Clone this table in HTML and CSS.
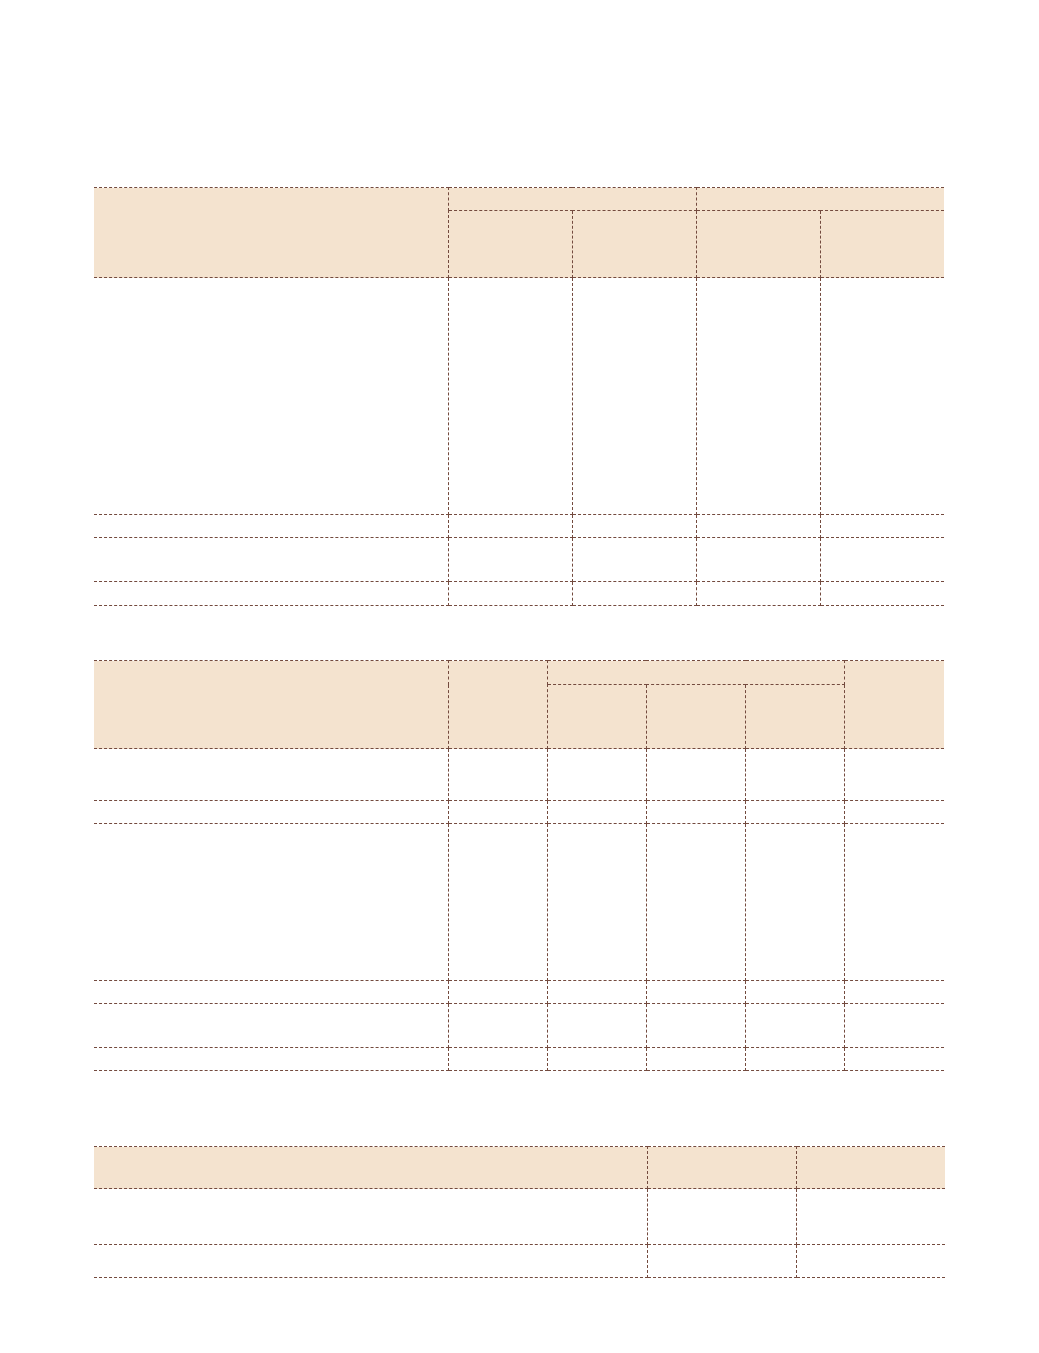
FILE: index.html
```html
<!DOCTYPE html>
<html>
<head>
<meta charset="utf-8">
<link rel="stylesheet" href="styles.css">
</head>
<body>
<div class="page">
  <table class="grid t1">
    <colgroup><col class="c-wide"><col class="c-124"><col class="c-124"><col class="c-124"><col class="c-124"></colgroup>
    <thead>
      <tr class="h23"><th rowspan="2"></th><th colspan="2"></th><th colspan="2"></th></tr>
      <tr class="h67"><th></th><th></th><th></th><th></th></tr>
    </thead>
    <tbody>
      <tr class="h237"><td></td><td></td><td></td><td></td><td></td></tr>
      <tr class="h23"><td></td><td></td><td></td><td></td><td></td></tr>
      <tr class="h44"><td></td><td></td><td></td><td></td><td></td></tr>
      <tr class="h24"><td></td><td></td><td></td><td></td><td></td></tr>
    </tbody>
  </table>

  <table class="grid t2">
    <colgroup><col class="c-wide"><col class="c-99"><col class="c-99"><col class="c-99"><col class="c-99"><col class="c-99"></colgroup>
    <thead>
      <tr class="h24"><th rowspan="2"></th><th rowspan="2"></th><th colspan="3"></th><th rowspan="2"></th></tr>
      <tr class="h64"><th></th><th></th><th></th></tr>
    </thead>
    <tbody>
      <tr class="h52"><td></td><td></td><td></td><td></td><td></td><td></td></tr>
      <tr class="h23"><td></td><td></td><td></td><td></td><td></td><td></td></tr>
      <tr class="h157"><td></td><td></td><td></td><td></td><td></td><td></td></tr>
      <tr class="h23"><td></td><td></td><td></td><td></td><td></td><td></td></tr>
      <tr class="h44"><td></td><td></td><td></td><td></td><td></td><td></td></tr>
      <tr class="h23"><td></td><td></td><td></td><td></td><td></td><td></td></tr>
    </tbody>
  </table>

  <table class="grid t3">
    <colgroup><col class="c-553"><col class="c-149"><col class="c-149"></colgroup>
    <thead>
      <tr class="h42"><th></th><th></th><th></th></tr>
    </thead>
    <tbody>
      <tr class="h56"><td></td><td></td><td></td></tr>
      <tr class="h33"><td></td><td></td><td></td></tr>
    </tbody>
  </table>
</div>
</body>
</html>
```
FILE: styles.css
```css
html, body {
  margin: 0;
  padding: 0;
  background: #ffffff;
  font-family: "Liberation Sans", Arial, sans-serif;
}

.page {
  padding: 187px 0 0 94px;
}

.grid {
  border-collapse: collapse;
  table-layout: fixed;
  border-top: 1px dashed #734a3e;
  border-bottom: 1px dashed #734a3e;
}

.grid th,
.grid td {
  padding: 0;
  border: 1px dashed #734a3e;
}

.grid tr > :first-child { border-left: none; }
.grid tr > :last-child { border-right: none; }

.grid thead tr:first-child th[rowspan="2"]:last-child { border-right: none; }

.grid th {
  background: #f4e3cf;
}

.t1 { width: 850px; }
.t2 { width: 850px; margin-top: 54px; }
.t3 { width: 851px; margin-top: 75px; }

.c-wide { width: 354px; }
.c-124 { width: 124px; }
.c-99 { width: 99.2px; }
.c-553 { width: 553px; }
.c-149 { width: 149px; }

.h23 { height: 23px; }
.h24 { height: 24px; }
.h33 { height: 33px; }
.h42 { height: 42px; }
.h44 { height: 44px; }
.h52 { height: 52px; }
.h56 { height: 56px; }
.h64 { height: 64px; }
.h67 { height: 67px; }
.h157 { height: 157px; }
.h237 { height: 237px; }
```
